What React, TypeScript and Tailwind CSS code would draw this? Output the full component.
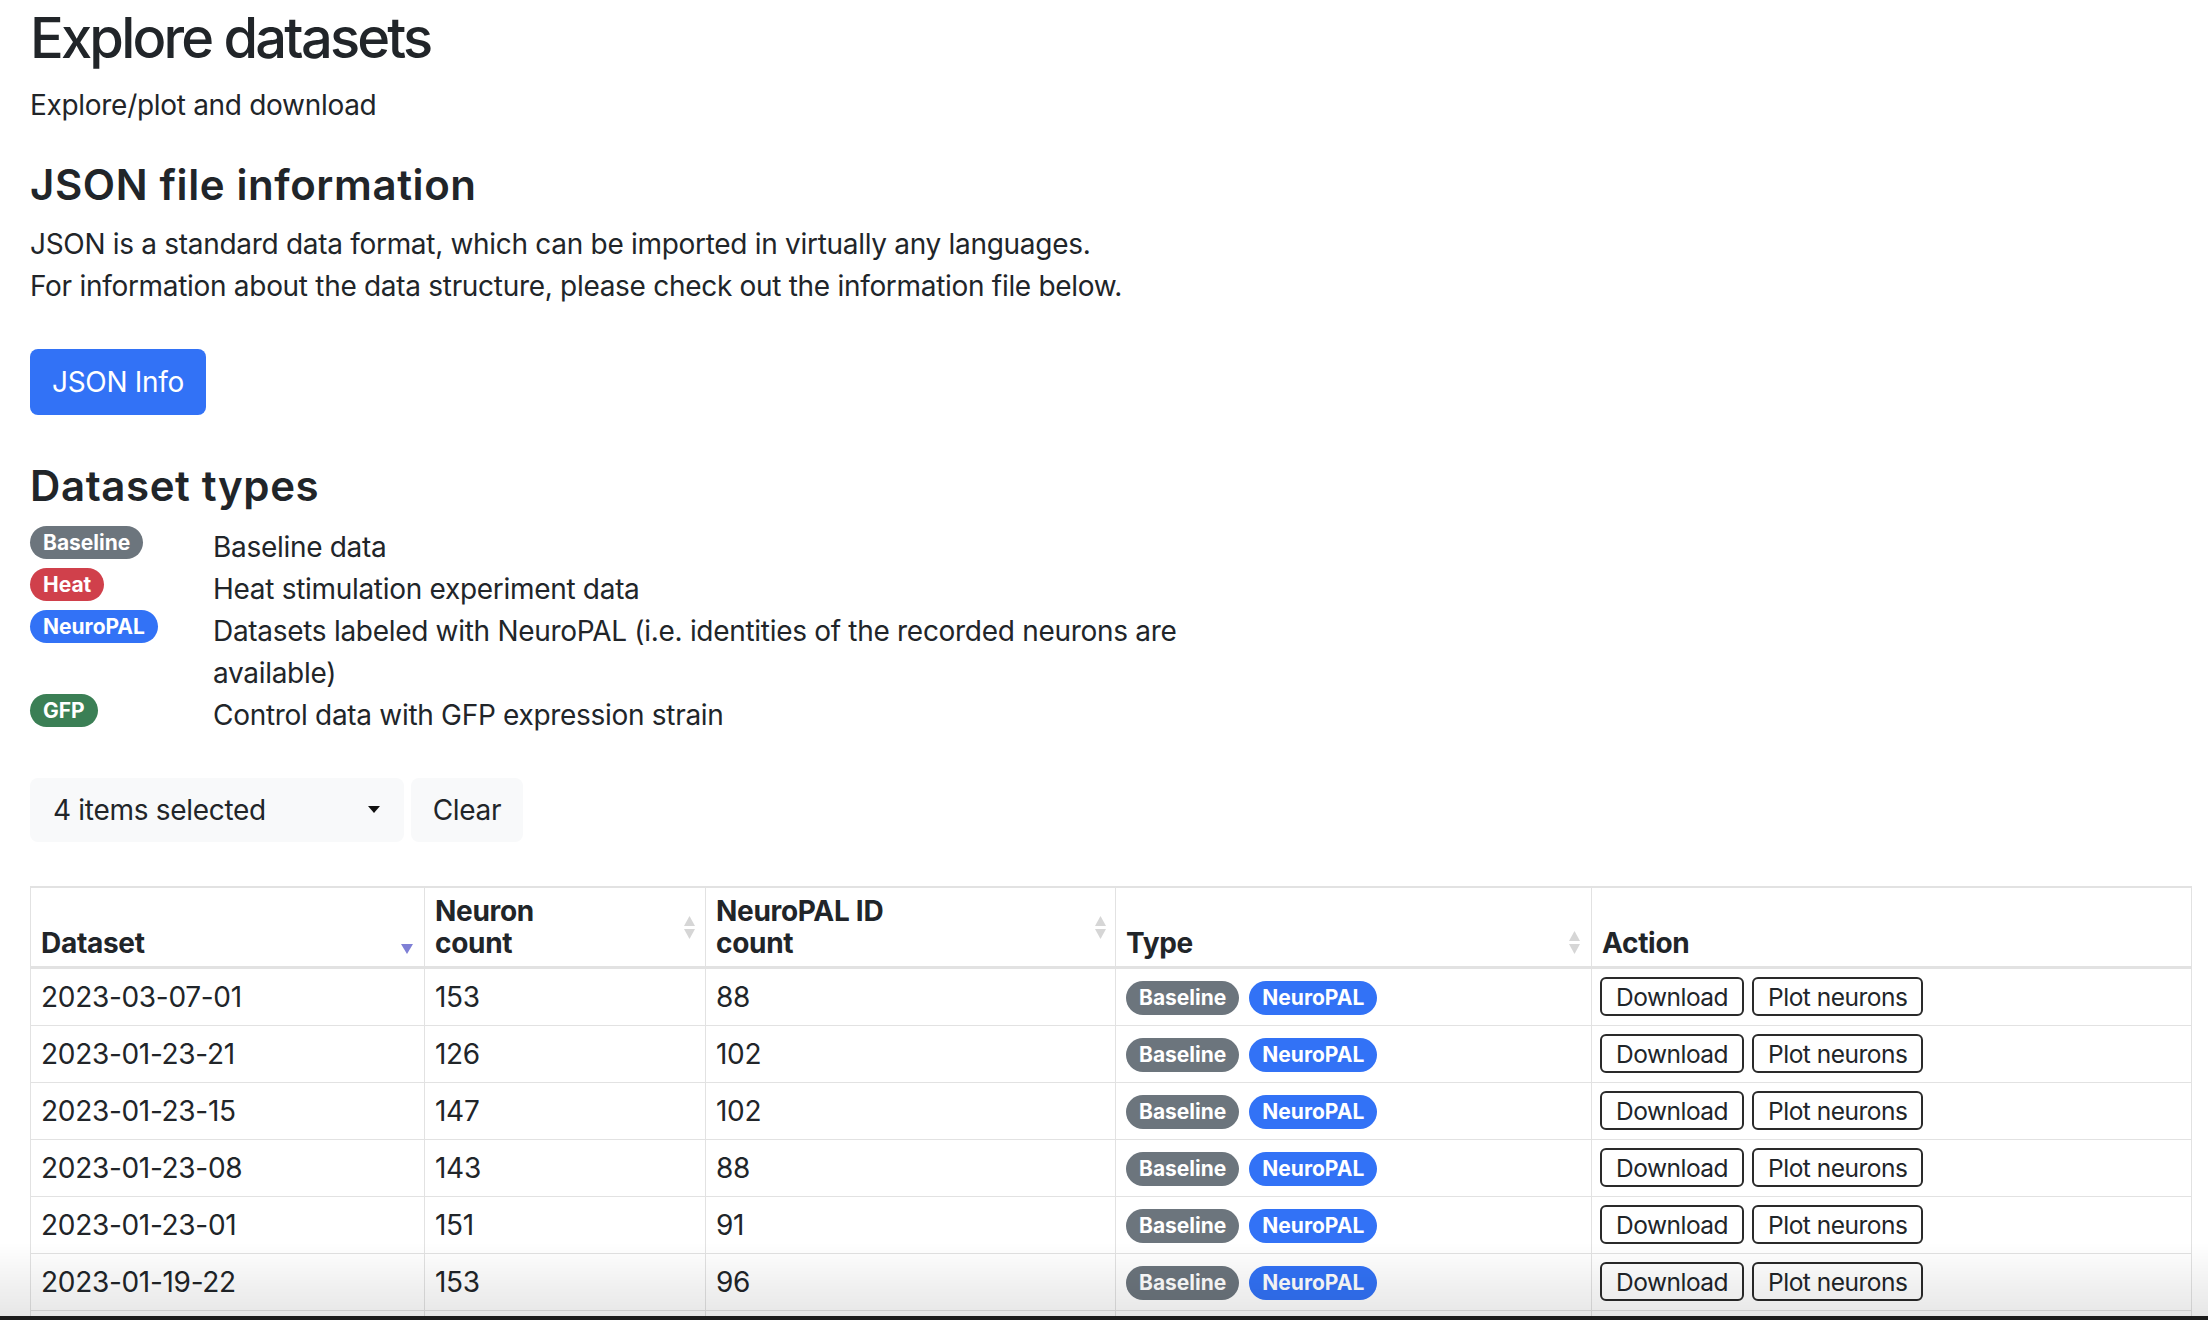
import React from "react";

type Kind = "Baseline" | "Heat" | "NeuroPAL" | "GFP";

const badgeColor: Record<Kind, string> = {
  Baseline: "bg-[#6c757d]",
  Heat: "bg-[#d0404b]",
  NeuroPAL: "bg-[#3272f6]",
  GFP: "bg-[#3b7f55]",
};

const Badge = ({ kind, tall }: { kind: Kind; tall?: boolean }) => (
  <span
    className={`inline-flex items-center rounded-full px-[13px] text-[21px] font-bold leading-none tracking-normal text-white ${
      tall ? "h-[34px]" : "h-[33px]"
    } ${badgeColor[kind]}`}
  >
    {kind}
  </span>
);

const types: { kind: Kind; text: string }[] = [
  { kind: "Baseline", text: "Baseline data" },
  { kind: "Heat", text: "Heat stimulation experiment data" },
  {
    kind: "NeuroPAL",
    text: "Datasets labeled with NeuroPAL (i.e. identities of the recorded neurons are available)",
  },
  { kind: "GFP", text: "Control data with GFP expression strain" },
];

const rows = [
  { id: "2023-03-07-01", neurons: 153, labeled: 88 },
  { id: "2023-01-23-21", neurons: 126, labeled: 102 },
  { id: "2023-01-23-15", neurons: 147, labeled: 102 },
  { id: "2023-01-23-08", neurons: 143, labeled: 88 },
  { id: "2023-01-23-01", neurons: 151, labeled: 91 },
  { id: "2023-01-19-22", neurons: 153, labeled: 96 },
  { id: "2023-01-19-15", neurons: 139, labeled: 94 },
];

// stacked grey arrows shown on unsorted columns
const SortArrows = ({ className }: { className: string }) => (
  <svg className={`absolute ${className}`} width="11" height="23" viewBox="0 0 11 23">
    <path d="M5.5 0 L11 10 L0 10 Z" fill="#d6d6d6" />
    <path d="M0 13 L11 13 L5.5 23 Z" fill="#d6d6d6" />
  </svg>
);

const th =
  "relative border-x border-t-2 border-b-[3px] border-[#e2e2e2] px-[10px] py-[7px] text-left align-bottom text-[28px] font-bold leading-[32px]";
const td = "border border-[#e2e2e2] px-[10px] py-[7px] align-middle text-[28px] leading-[42px]";
const actionBtn =
  "h-[39px] rounded-[6px] border-2 border-[#2a2a2a] bg-white px-[14px] text-[24.5px] leading-none tracking-[-0.5px]";

export default function App() {
  return (
    <div className="relative min-h-screen bg-white px-[30px] font-['Inter','Noto_Sans',sans-serif] tracking-[-0.3px] text-[#212529]">
      <h1 className="pt-[5px] text-[56px] font-medium leading-[1.2] tracking-[-2.8px]">Explore datasets</h1>
      <p className="mt-[12px] text-[28px] leading-[42px]">Explore/plot and download</p>

      <h2 className="mt-[34px] text-[42px] font-semibold leading-[1.2] tracking-[0.6px]">JSON file information</h2>
      <p className="mt-[12px] text-[28px] leading-[42px]">
        JSON is a standard data format, which can be imported in virtually any languages.
        <br />
        For information about the data structure, please check out the information file below.
      </p>
      <button className="mt-[42px] h-[66px] rounded-[8px] bg-[#3272f6] px-[22px] text-[28px] text-white">
        JSON Info
      </button>

      <h2 className="mt-[46px] text-[42px] font-semibold leading-[1.2] tracking-[0.6px]">Dataset types</h2>
      <div className="mt-[15px] flex flex-col">
        {types.map((t) => (
          <div key={t.kind} className="flex items-start">
            <div className="w-[183px]">
              <Badge kind={t.kind} />
            </div>
            <div className="w-[1000px] text-[28px] leading-[42px]">{t.text}</div>
          </div>
        ))}
      </div>

      <div className="mt-[42px] flex gap-[7px]">
        <div className="flex h-[64px] w-[374px] items-center justify-between rounded-[8px] bg-[#f8f9fa] pl-[23px] pr-[24px] text-[28px]">
          <span>4 items selected</span>
          <svg width="12" height="7" viewBox="0 0 12 7">
            <path d="M0 0 L12 0 L6 7 Z" fill="#111" />
          </svg>
        </div>
        <button className="h-[64px] w-[112px] rounded-[8px] bg-[#f8f9fa] text-[28px]">Clear</button>
      </div>

      <table className="mt-[44px] w-[2161px] table-fixed border-collapse">
        <colgroup>
          <col className="w-[394px]" />
          <col className="w-[281px]" />
          <col className="w-[410px]" />
          <col className="w-[476px]" />
          <col className="w-[600px]" />
        </colgroup>
        <thead>
          <tr>
            <th className={th}>
              Dataset
              <svg className="absolute right-[11px] top-[56px]" width="12" height="10" viewBox="0 0 12 10">
                <path d="M0 0 L12 0 L6 10 Z" fill="#7f80d6" />
              </svg>
            </th>
            <th className={th}>
              Neuron
              <br />
              count
              <SortArrows className="right-[10px] top-[28px]" />
            </th>
            <th className={th}>
              NeuroPAL ID
              <br />
              count
              <SortArrows className="right-[9px] top-[28px]" />
            </th>
            <th className={th}>
              Type
              <SortArrows className="right-[11px] top-[43px]" />
            </th>
            <th className={th}>Action</th>
          </tr>
        </thead>
        <tbody>
          {rows.map((r) => (
            <tr key={r.id}>
              <td className={td}>{r.id}</td>
              <td className={td}>{r.neurons}</td>
              <td className={td}>{r.labeled}</td>
              <td className={td}>
                <div className="flex items-center gap-[10px] pt-[2px]">
                  <Badge kind="Baseline" tall />
                  <Badge kind="NeuroPAL" tall />
                </div>
              </td>
              <td className={`${td} pl-[8px]`}>
                <div className="flex items-center gap-[8px]">
                  <button className={actionBtn}>Download</button>
                  <button className={actionBtn}>Plot neurons</button>
                </div>
              </td>
            </tr>
          ))}
        </tbody>
      </table>

      {/* window edge shading over the last visible row */}
      <div className="pointer-events-none fixed inset-x-0 bottom-0 h-[78px] bg-gradient-to-b from-transparent to-black/10" />
      <div className="pointer-events-none fixed inset-x-0 bottom-0 h-[4px] bg-[#1c1c1c]" />
    </div>
  );
}
